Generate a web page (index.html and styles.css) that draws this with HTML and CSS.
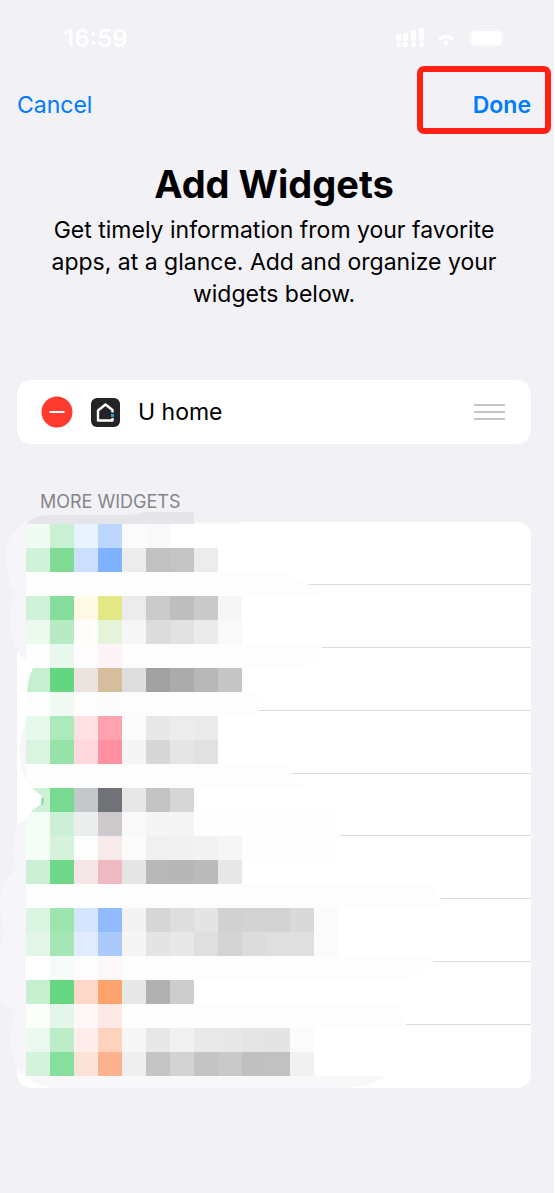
FILE: index.html
```
<!DOCTYPE html>
<html lang="en">
<head>
    <meta charset="UTF-8">
    <meta name="viewport" content="width=device-width, initial-scale=1.0">
    <title>Add Widgets</title>
    <link rel="stylesheet" href="styles.css">
</head>
<body>

<div class="status-bar">
    <span class="time">16:59</span>
    <svg class="status-icons" width="114" height="22" viewBox="0 0 114 22" fill="#fff" aria-hidden="true">
        <!-- Signal -->
        <rect x="1" y="7" width="5" height="7" rx="2"/>
        <rect x="8" y="6" width="5" height="8" rx="2"/>
        <rect x="16" y="3" width="5" height="11" rx="2"/>
        <rect x="24" y="1" width="5" height="13" rx="2"/>
        <rect x="1" y="15" width="5" height="5" rx="2"/>
        <rect x="8" y="15" width="5" height="5" rx="2"/>
        <rect x="16" y="15" width="5" height="5" rx="2"/>
        <rect x="24" y="15" width="5" height="5" rx="2"/>
        <!-- Wifi -->
        <path d="M43 11q8-7 16 0l-2.500 2.500q-5.500-4-11 0z"/>
        <path d="M47.500 15.500q3.500-2.500 7 0L51 19z"/>
        <path d="M41 7q10-7 20 0" fill="none" stroke="#f4f3f8" stroke-width="2"/>
        <!-- Battery -->
        <rect x="74.500" y="2.500" width="34" height="17" rx="6" fill="none" stroke="#f8f8fb"/>
        <rect x="76" y="4" width="31" height="14" rx="4"/>
        <path d="M110 8q3 3 0 6z" fill="#f8f8fb"/>
    </svg>
</div>

<nav class="nav-bar">
    <button type="button" class="cancel">Cancel</button>
    <button type="button" class="done">Done</button>
</nav>

<header class="intro">
    <h1>Add Widgets</h1>
    <p>Get timely information from your favorite apps, at a glance. Add and organize your widgets below.</p>
</header>

<main>
    <div class="card widget">
        <button type="button" class="remove" aria-label="Remove U home">
            <svg width="32" height="32" viewBox="0 0 32 32">
                <circle cx="16" cy="16" r="15.500" fill="#ff3b30"/>
                <path d="M8.500 16h15" stroke="#fff" stroke-width="2"/>
            </svg>
        </button>
        <svg class="app-icon" width="29" height="29" viewBox="0 0 29 29" aria-hidden="true">
            <rect width="29" height="29" rx="6" fill="#242426"/>
            <path d="M21.500 14.500V12L14.500 6.500l-7.500 6V22.500h14.500v-2.500" fill="none" stroke="#fff" stroke-width="2.400" stroke-linejoin="round"/>
            <rect x="20" y="16" width="3" height="3" fill="#25a6d9"/>
        </svg>
        <span class="name">U home</span>
        <button type="button" class="handle" aria-label="Reorder U home">
            <svg width="31" height="18" viewBox="0 0 31 18">
                <path d="M0 2h31M0 9h31M0 16h31" stroke="#c4c4c6" stroke-width="2"/>
            </svg>
        </button>
    </div>

    <h2>MORE WIDGETS</h2>
    <div class="more">
        <ul class="card list">
            <li></li>
            <li></li>
            <li></li>
            <li></li>
            <li></li>
            <li></li>
            <li></li>
            <li></li>
            <li></li>
        </ul>
        <svg class="mosaic" width="460" height="580" viewBox="0 512 460 580" aria-hidden="true">
            <!-- Haze round the left and bottom edges -->
            <g fill="#f5f5fa">
                <path d="M26 523Q6 531 6 558Q6 584 18 595H26z"/>
                <path d="M26 590H18Q10 602 10 624Q10 650 26 660z"/>
                <path d="M26 724Q19 736 20 754Q21 770 26 780z"/>
                <path d="M26 816Q13 828 13 850Q13 862 17 870H26z"/>
                <path d="M26 868H17Q0 880 0 902Q0 924 6 930Q0 940 0 958V1002L17 1012H26z"/>
                <path d="M26 1010H18Q10 1022 10 1040Q10 1060 20 1072L26 1076z"/>
            </g>
            <path d="M20 1070L26 1076H388Q370 1086 345 1088H60Q35 1088 20 1070z" fill="#f8f8fb"/>
            <path d="M26 524Q35 515 50 515H130L146 512H194V524z" fill="#e6e5ea"/>
            <path d="M194 522H241L244 524H194z" fill="#f9f9fb"/>
            <!-- Smears that hide the start of each separator -->
            <g fill="#fdfdfd">
                <path d="M26 572H270Q302 573 320 595V596H26z"/>
                <path d="M26 644H323Q318 662 302 668H26z"/>
                <path d="M26 692H257L259 716H35Q26 705 26 692z"/>
                <path d="M26 764H289L292 780L312 788H26z"/>
                <path d="M26 812H338L340 836L336 860H26z" fill="#fefefe"/>
                <path d="M26 884H428Q440 894 443 908H26z"/>
                <path d="M26 956H436Q428 976 402 980H26z"/>
                <path d="M26 1004H397Q404 1014 406 1028H26z"/>
            </g>
            <g id="cells" shape-rendering="crispEdges"></g>
            <!-- Nicks in the left edge -->
            <path d="M25 660L33 668Q28 677 27 692H17V655z" fill="#fff"/>
            <path d="M26 782L32 788Q36 792 42 796Q43 801 42 804Q35 807 31 812L24 822H18V776z" fill="#fff"/>
            <path d="M42 797L43.500 798V803L41 806z" fill="#78da91"/>
        </svg>
    </div>
</main>

<script>
    // One entry per mosaic row, top to bottom, each cell is 24x24
    const rows = [
        ['f0fcf3', 'c8f0d3', 'e9f2ff', 'bbd6ff', 'fbfbfb', 'f9f9f9'],
        ['d0f2da', '80dc95', 'cddfff', '7fb2ff', 'ececec', 'c1c1c1', 'c5c5c5', 'ececec'],
        [],
        ['d0f2da', '85de9b', 'fff9e6', 'e4e884', 'ececec', 'cbcbcb', 'bebebe', 'cacaca', 'f6f6f6'],
        ['ebf9ef', 'b6ebc3', 'fffefa', 'e5f4d8', 'f6f6f6', 'dcdcdc', 'e2e2e2', 'ebebeb', 'f9f9f9'],
        ['fefefe', 'e9f8ed', 'fefcfd', 'fef3f7'],
        ['c7efd1', '64d680', 'ebe3df', 'd6be9c', 'dedede', 'a1a1a1', 'acacac', 'b8b8b8', 'c6c6c6'],
        [null, 'f0faf2', 'fdfdfd', 'fcfcfc'],
        ['e7f8ec', 'ace9bb', 'ffe0e5', 'fea2b0', 'fcfcfc', 'e8e8e8', 'ececec', 'eaeaea'],
        ['daf4e1', '97e2a9', 'ffd9df', 'fe909f', 'f5f5f5', 'd7d7d7', 'e5e5e5', 'e1e1e1'],
        [],
        ['cdf1d5', '78da91', 'c4c8cb', '717278', 'e7e7e7', 'c4c4c4', 'd6d6d6'],
        ['f5fdf8', 'ccf0d6', 'eaeeec', 'cec9cd', 'f9f9f9', 'f5f5f5', 'f5f5f5'],
        ['f5fdf8', 'd6f2dd', 'fdfdfd', 'f8eaea', 'fbfbfb', 'f0f0f0', 'f1f1f1', 'f2f2f2', 'f6f6f6'],
        ['ccf0d5', '6ed888', 'f7e6e8', 'efbac2', 'e5e5e5', 'b8b8b8', 'b7b7b7', 'bababa', 'e7e7e7'],
        [],
        ['dcf5e3', '9de4af', 'd5e4ff', '90bcff', 'f3f3f3', 'd6d6d6', 'dedede', 'e4e4e4', 'd1d1d1', 'd3d3d3', 'd3d3d3', 'd9d9d9', 'fbfbfb'],
        ['e4f6e8', 'a5e6b5', 'e0ebff', 'a9cafb', 'f5f5f5', 'e4e4e4', 'e8e8e8', 'dfdfdf', 'd4d4d4', 'dcdcdc', 'dfdfdf', 'dfdfdf', 'fbfbfb'],
        ['ffffff', 'f5fbf7', 'fdfdfd', 'fdf7f7'],
        ['c6efd0', '65d681', 'fdd8ca', 'fca46c', 'e8e8e8', 'b1b1b1', 'cdcdcd'],
        ['fcfefb', 'e3f6e9', 'fef7f7', 'fde8e6'],
        ['edf8f0', 'bdecc8', 'ffeeeb', 'fdd3bd', 'f7f7f7', 'e8e8e8', 'f1f1f1', 'e9e9e9', 'e8e8e8', 'e5e5e5', 'e4e4e4', 'fbfbfb'],
        ['d5f2dc', '87df9e', 'fde2d7', 'fdb28f', 'efefef', 'c5c5c5', 'd3d3d3', 'c4c4c4', 'c9c9c9', 'c0c0c0', 'c1c1c1', 'f1f1f1']
    ];
    const cells = document.getElementById('cells');

    rows.forEach((row, r) => {
        row.forEach((color, c) => {
            if (!color) return;
            const rect = document.createElementNS('http://www.w3.org/2000/svg', 'rect');
            rect.setAttribute('x', 26 + c * 24);
            rect.setAttribute('y', 524 + r * 24);
            rect.setAttribute('width', 24);
            rect.setAttribute('height', 24);
            rect.setAttribute('fill', '#' + color);
            cells.appendChild(rect);
        });
    });
</script>

</body>
</html>
```
FILE: styles.css
```
* {
    box-sizing: border-box;
}

html {
    background-color: #f2f1f6;
}

body {
    font-family: Inter, "Liberation Sans", sans-serif;
    margin: 0;
    min-height: 100vh;
    background-color: #f2f1f6;
    border-right: 1px solid #fff;
    color: #000;
}

button {
    padding: 0;
    border: none;
    background: none;
    font: inherit;
    cursor: pointer;
}

.status-bar {
    display: flex;
    justify-content: space-between;
    align-items: center;
    height: 66px;
    padding: 10px 45px 0 64px;
    color: #fff;
}

.time {
    font-size: 24px;
    font-weight: 600;
}

.nav-bar {
    display: flex;
    justify-content: space-between;
    padding: 0 3px 0 17px;
    font-size: 23px;
}

.nav-bar button {
    color: #007aff;
}

.nav-bar .cancel {
    padding-top: 9px;
}

.nav-bar .done {
    width: 134px;
    height: 68px;
    padding: 9px 14px 0 0;
    border: 6px solid #ff2014;
    border-radius: 7px;
    text-align: right;
    font-weight: 600;
}

.intro {
    padding: 26px 43px 0 37px;
    text-align: center;
}

h1 {
    margin: 0;
    font-size: 38px;
    line-height: 48px;
    font-weight: 700;
}

.intro p {
    margin: 6px 0 0;
    font-size: 23px;
    line-height: 32px;
}

main {
    padding: 70px 23px 105px 17px;
}

.card {
    background-color: #fff;
    border-radius: 14px;
}

.widget {
    display: flex;
    align-items: center;
    height: 64px;
    padding: 0 26px 0 24px;
}

.widget svg {
    display: block;
}

.app-icon {
    margin: 0 18px;
}

.name {
    flex: 1;
    font-size: 23px;
}

h2 {
    margin: 46px 0 8px 23px;
    font-size: 18px;
    line-height: 24px;
    font-weight: 400;
    color: #85858b;
}

.more {
    position: relative;
}

.list {
    display: grid;
    grid-template-rows: repeat(9, 1fr);
    min-height: 566px;
    margin: 0;
    padding: 0;
    list-style: none;
    overflow: hidden;
}

.list li {
    margin-left: 120px;
    border-bottom: 1px solid #dcdcde;
}

.list li:last-child {
    border-bottom: none;
}

.mosaic {
    position: absolute;
    top: -10px;
    left: -17px;
}
```
